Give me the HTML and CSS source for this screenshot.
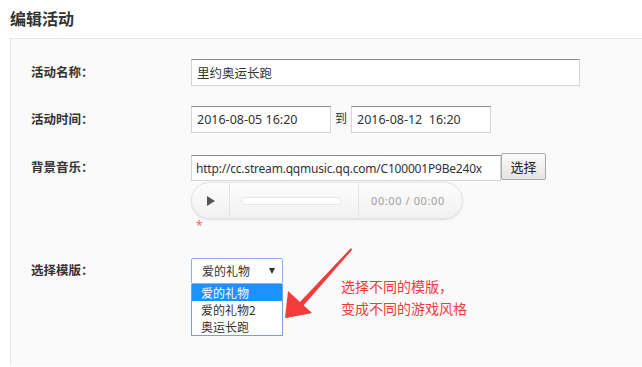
FILE: index.html
```html
<!DOCTYPE html>
<html>
<head>
  <meta charset="utf-8">
  <title>编辑活动</title>
  <link rel="stylesheet" href="styles.css">
</head>
<body>

<h1 class="page-title">编辑活动</h1>

<div class="panel">
  <div class="row">
    <label class="row-label">活动名称：</label>
    <input class="text-input name-input" type="text" value="里约奥运长跑">
  </div>

  <div class="row">
    <label class="row-label">活动时间：</label>
    <input class="text-input date-input" type="text" value="2016-08-05 16:20">
    <span class="to">到</span>
    <input class="text-input date-input" type="text" value="2016-08-12  16:20">
  </div>

  <div class="row music-row">
    <label class="row-label">背景音乐：</label>
    <div class="music-box">
      <div class="url-line">
        <input class="text-input url-input" type="text" value="http://cc.stream.qqmusic.qq.com/C100001P9Be240x">
        <button class="pick-btn" type="button">选择</button>
      </div>
      <div class="player">
        <div class="play-cell"><span class="play-icon"></span></div>
        <div class="track-cell"><div class="track"></div></div>
        <div class="time-cell">00:00 / 00:00</div>
      </div>
      <div class="required">*</div>
    </div>
  </div>

  <div class="row template-row">
    <label class="row-label">选择模版：</label>
    <div class="select-wrap">
      <div class="fake-select">爱的礼物<span class="caret"></span></div>
      <ul class="options">
        <li class="option active">爱的礼物</li>
        <li class="option">爱的礼物2</li>
        <li class="option">奥运长跑</li>
      </ul>
    </div>
  </div>

  <svg class="arrow" width="80" height="80" viewBox="280 244 80 80">
    <polygon points="351,248 349,250 300,302 285,318 311,313 303,306 352,250" fill="#f43b3b"/>
    <polygon points="285,318 288,291 312,313" fill="#f43b3b"/>
  </svg>
  <div class="note">选择不同的模版，<br>变成不同的游戏风格</div>
</div>

</body>
</html>
```

FILE: styles.css
```css
body {
  margin: 0;
  background: #fff;
  font-family: "Noto Sans", "Noto Sans CJK SC", sans-serif;
  color: #333;
}
.page-title {
  margin: 0;
  padding: 7px 0 0 10px;
  height: 31px;
  font-size: 16px;
  font-weight: bold;
  line-height: 24px;
  color: #333;
}
.panel {
  position: relative;
  margin-left: 10px;
  height: 328px;
  background: #fafafa;
  border-top: 1px solid #e8e8e8;
  border-left: 1px solid #e8e8e8;
  padding: 20px 0 0 20px;
  box-sizing: border-box;
}
.row {
  display: flex;
  align-items: flex-start;
  margin-bottom: 20px;
}
.row-label {
  width: 160px;
  flex: none;
  font-size: 12.5px;
  font-weight: bold;
  line-height: 27px;
  color: #333;
}
.text-input {
  box-sizing: border-box;
  height: 27px;
  margin: 0;
  padding: 0 5px;
  border: 1px solid #d4d4d4;
  border-top-color: #8a8a8a;
  background: #fff;
  font-family: "Noto Sans", "Noto Sans CJK SC", sans-serif;
  font-size: 12.5px;
  color: #333;
}
.name-input {
  width: 389px;
}
.date-input {
  width: 140px;
}
.to {
  width: 20px;
  text-align: center;
  font-size: 12px;
  line-height: 25px;
}
.music-row {
  margin-top: 1px;
  margin-bottom: 26px;
}
.music-row .row-label {
  margin-top: 1px;
}
.url-line {
  display: flex;
  align-items: flex-start;
}
.url-input {
  width: 310px;
  margin-top: 2px;
  height: 26px;
  padding: 0 4px;
  font-size: 12px;
  letter-spacing: -0.2px;
  overflow: hidden;
}
.pick-btn {
  box-sizing: border-box;
  width: 45px;
  height: 27px;
  margin: 0;
  padding: 0;
  border: 1px solid #a9a9a9;
  border-radius: 2px;
  background: linear-gradient(#fbfbfb, #e4e4e4);
  font-family: "Noto Sans CJK SC", sans-serif;
  font-size: 13px;
  color: #222;
}
.player {
  display: flex;
  box-sizing: border-box;
  width: 272px;
  height: 37px;
  margin-top: 1px;
  border: 1px solid #e2e2e2;
  border-radius: 19px;
  background: linear-gradient(#fdfdfd, #f1f1f1);
  box-shadow: 0 1px 2px rgba(0,0,0,0.12);
}
.play-cell {
  width: 37px;
  border-right: 1px solid #e4e4e4;
  display: flex;
  align-items: center;
  justify-content: center;
}
.play-icon {
  width: 0;
  height: 0;
  margin-left: 1px;
  border-left: 8px solid #555;
  border-top: 5px solid transparent;
  border-bottom: 5px solid transparent;
}
.track-cell {
  width: 117px;
  border-right: 1px solid #e4e4e4;
  display: flex;
  align-items: center;
  padding-left: 11px;
}
.track {
  width: 101px;
  height: 8px;
  box-sizing: border-box;
  border: 1px solid #e6e6e6;
  border-radius: 4px;
  background: #fff;
}
.time-cell {
  padding-left: 12px;
  font-size: 11px;
  letter-spacing: 0.6px;
  line-height: 35px;
  color: #a0a0a0;
}
.required {
  margin: 1px 0 0 5px;
  font-size: 12px;
  line-height: 12px;
  color: #f26a5a;
}
.template-row .row-label {
  line-height: 26px;
}
.select-wrap {
  width: 92px;
}
.fake-select {
  position: relative;
  box-sizing: border-box;
  height: 26px;
  padding-left: 10px;
  border: 1px solid #8cb1e8;
  border-radius: 2px;
  background: #fff;
  font-family: "Noto Sans CJK SC", sans-serif;
  font-size: 12px;
  line-height: 24px;
  color: #333;
}
.caret {
  position: absolute;
  right: 7px;
  top: 9px;
  width: 0;
  height: 0;
  border-top: 6px solid #333;
  border-left: 3.5px solid transparent;
  border-right: 3.5px solid transparent;
}
.options {
  list-style: none;
  margin: 0;
  padding: 0;
  border: 1px solid #7c9fd6;
  border-top: none;
  background: #fff;
}
.option {
  height: 17px;
  padding-left: 9px;
  font-family: "Noto Sans CJK SC", sans-serif;
  font-size: 12px;
  line-height: 17px;
  color: #333;
}
.option.active {
  background: #1e90ff;
  color: #fff;
}
.arrow {
  position: absolute;
  left: 269px;
  top: 205px;
}
.note {
  position: absolute;
  left: 330px;
  top: 236px;
  font-family: "Noto Sans CJK SC", sans-serif;
  font-size: 14px;
  line-height: 22px;
  color: #f23a3a;
}
```
